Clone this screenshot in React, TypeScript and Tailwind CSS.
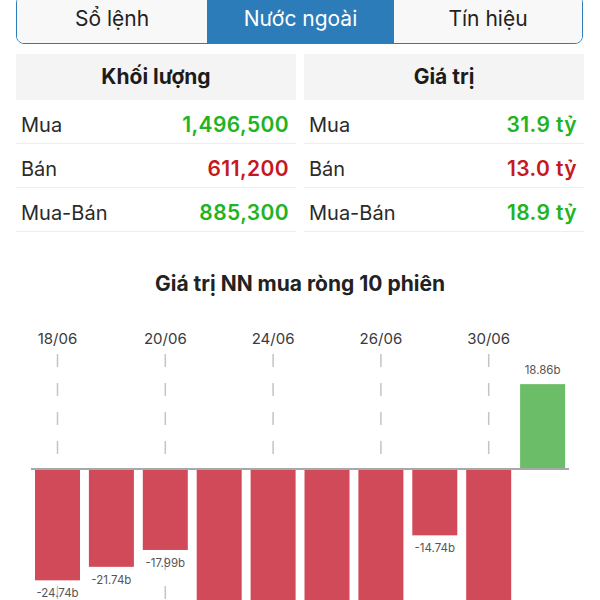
import React from "react";

const tabs = ["Sổ lệnh", "Nước ngoài", "Tín hiệu"];

const volumeRows = [
  { label: "Mua", value: "1,496,500", color: "text-[#22b322]" },
  { label: "Bán", value: "611,200", color: "text-[#c41a1f]" },
  { label: "Mua-Bán", value: "885,300", color: "text-[#22b322]" },
];

const valueRows = [
  { label: "Mua", value: "31.9 tỷ", color: "text-[#22b322]" },
  { label: "Bán", value: "13.0 tỷ", color: "text-[#c41a1f]" },
  { label: "Mua-Bán", value: "18.9 tỷ", color: "text-[#22b322]" },
];

// net foreign buy, billions
const bars = [
  { v: -24.74, label: "-24.74b" },
  { v: -21.74, label: "-21.74b" },
  { v: -17.99, label: "-17.99b" },
  { v: -40 },
  { v: -40 },
  { v: -40 },
  { v: -40 },
  { v: -14.74, label: "-14.74b" },
  { v: -40 },
  { v: 18.86, label: "18.86b" },
];

const dates = ["18/06", "20/06", "24/06", "26/06", "30/06"];

function StatTable({ title, rows }: { title: string; rows: typeof volumeRows }) {
  return (
    <div className="flex flex-col">
      <div className="h-[46px] bg-[#f4f4f4] flex items-center justify-center text-[21px] font-bold text-[#1c1c1c]">
        {title}
      </div>
      {rows.map((r) => (
        <div
          key={r.label}
          className="h-[44px] border-b border-[#eeeeee] flex items-center justify-between pl-[5px] pr-[7px] pt-[6px]"
        >
          <span className="text-[20px] text-[#2a2a2a]">{r.label}</span>
          <span className={`text-[21px] font-semibold tracking-[0.4px] ${r.color}`}>{r.value}</span>
        </div>
      ))}
    </div>
  );
}

function NetChart() {
  const axisY = 165;
  const scale = 4.5;
  const pitch = 53.9;
  const w = 45;
  return (
    <svg width="600" height="302" viewBox="0 0 600 302" className="block">
      {dates.map((d, i) => {
        const cx = 35 + i * 2 * pitch + w / 2;
        return (
          <g key={d}>
            <text x={cx} y={40} textAnchor="middle" fontSize="15" fill="#3a3a3a" fontFamily="Inter, sans-serif">
              {d}
            </text>
            <line x1={cx} y1={50} x2={cx} y2={302} stroke="#c4c4c4" strokeWidth="1.5" strokeDasharray="13 16" />
          </g>
        );
      })}
      {bars.map((b, i) => {
        const x = 35 + i * pitch;
        const h = Math.abs(b.v) * scale;
        const pos = b.v > 0;
        const y = pos ? axisY - h : axisY;
        return (
          <g key={i}>
            <rect x={x} y={y} width={w} height={h} fill={pos ? "#6cbd68" : "#d04a59"} />
            {b.label && (
              <text
                x={x + w / 2}
                y={pos ? y - 10 : y + h + 17}
                textAnchor="middle"
                fontSize="11.5"
                fill="#555"
                fontFamily="Inter, sans-serif"
              >
                {b.label}
              </text>
            )}
          </g>
        );
      })}
      <line x1={31} y1={axisY} x2={569} y2={axisY} stroke="#a8a8a8" strokeWidth="2" />
    </svg>
  );
}

export default function App() {
  return (
    <div className="w-[600px] h-[600px] overflow-hidden bg-white font-['Inter',sans-serif]">
      <div className="ml-[16px] mr-[17px] mt-[-5px] h-[49px] grid grid-cols-[190px_187px_1fr] border-[1.5px] border-[#2c7cb9] rounded-[8px] overflow-hidden">
        {tabs.map((t, i) => (
          <div
            key={t}
            className={
              i === 1
                ? "flex items-center justify-center bg-[#2c7cb9] text-white text-[21px] pb-[1px]"
                : "flex items-center justify-center bg-[#f8f8f8] text-[#222] text-[21px] pb-[1px]"
            }
          >
            {t}
          </div>
        ))}
      </div>

      <div className="mt-[10px] px-[16px] grid grid-cols-2 gap-[8px]">
        <StatTable title="Khối lượng" rows={volumeRows} />
        <StatTable title="Giá trị" rows={valueRows} />
      </div>

      <div className="mt-[36px] text-center text-[21px] font-bold text-[#222]">Giá trị NN mua ròng 10 phiên</div>

      <div className="mt-[4px]">
        <NetChart />
      </div>
    </div>
  );
}
